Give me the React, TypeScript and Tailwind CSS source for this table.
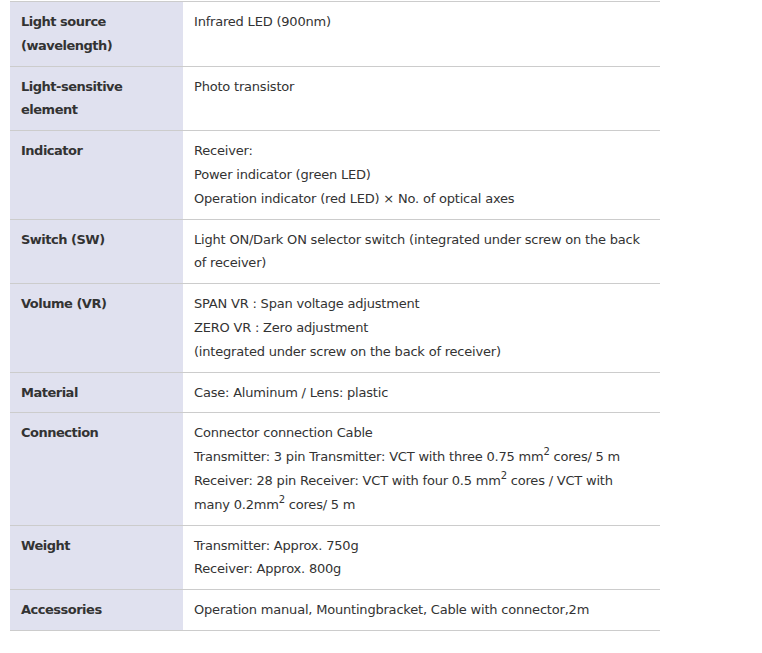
import type { ReactNode } from 'react'

interface SpecRow {
    label: ReactNode
    value: ReactNode
}

const rows: SpecRow[] = [
    { label: <>Light source<br />(wavelength)</>, value: 'Infrared LED (900nm)' },
    { label: <>Light-sensitive<br />element</>, value: 'Photo transistor' },
    {
        label: 'Indicator',
        value: (
            <>
                Receiver:<br />
                Power indicator (green LED)<br />
                Operation indicator (red LED) × No. of optical axes
            </>
        ),
    },
    {
        label: 'Switch (SW)',
        value: 'Light ON/Dark ON selector switch (integrated under screw on the back of receiver)',
    },
    {
        label: 'Volume (VR)',
        value: (
            <>
                SPAN VR : Span voltage adjustment<br />
                ZERO VR : Zero adjustment<br />
                (integrated under screw on the back of receiver)
            </>
        ),
    },
    { label: 'Material', value: 'Case: Aluminum / Lens: plastic' },
    {
        label: 'Connection',
        value: (
            <>
                Connector connection Cable<br />
                Transmitter: 3 pin Transmitter: VCT with three 0.75 mm<Sup>2</Sup> cores/ 5 m<br />
                Receiver: 28 pin Receiver: VCT with four 0.5 mm<Sup>2</Sup> cores / VCT with many
                0.2mm<Sup>2</Sup> cores/ 5 m
            </>
        ),
    },
    {
        label: 'Weight',
        value: (
            <>
                Transmitter: Approx. 750g<br />
                Receiver: Approx. 800g
            </>
        ),
    },
    { label: 'Accessories', value: 'Operation manual, Mountingbracket, Cable with connector,2m' },
]

function Sup({ children }: { children: ReactNode }) {
    return <sup className="text-[10px] leading-none relative -top-[6px] align-baseline">{children}</sup>
}

export default function App() {
    return (
        <div className="min-h-[653px] bg-white pt-px pl-[10px] font-['DejaVu_Sans',sans-serif] text-[13px] leading-[23.8px] text-[#333]">
            <div className="w-[650px] border-t border-[#cccccc]">
                {rows.map((row, i) => (
                    <div key={i} className="grid grid-cols-[173px_1fr] border-b border-[#cccccc]">
                        <div className="bg-[#e0e1ef] px-[11px] py-2 font-bold tracking-[-0.5px]">{row.label}</div>
                        <div className="px-[11px] py-2 tracking-[-0.2px]">{row.value}</div>
                    </div>
                ))}
            </div>
        </div>
    )
}
